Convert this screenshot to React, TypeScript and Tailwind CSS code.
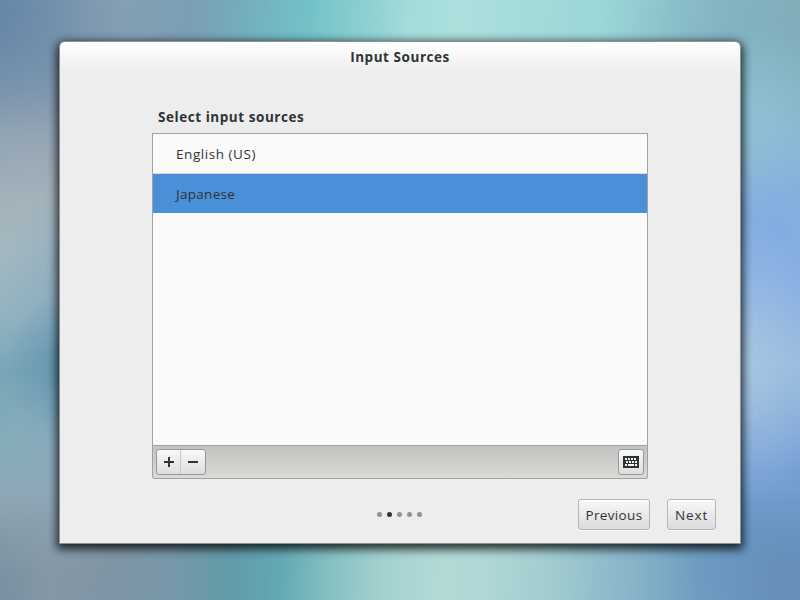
import type { ReactNode } from "react";

function Backdrop() {
  return (
    <>
      <div className="absolute inset-0 bg-[linear-gradient(96deg,#6787a8_0px,#7190ab_50px,#8099b1_90px,#84a0b4_125px,#7a9fb3_190px,#74aebc_245px,#73c2c8_310px,#90d1d2_370px,#a4dcda_410px,#abe0dd_460px,#a5dbdb_520px,#9cd6d7_600px,#8bc0ca_670px,#82b4c1_730px,#82aeba_800px)]" />
      <div className="absolute inset-0 bg-[linear-gradient(92deg,#748c9c_0px,#8598a8_70px,#8095a5_130px,#7798a9_190px,#619ba8_250px,#62a9b3_300px,#85c0c2_350px,#a2d1cf_400px,#b2dad7_460px,#aed7d5_510px,#a1cccf_570px,#88b5c9_650px,#6f9dc2_720px,#668fb9_800px)] [mask-image:linear-gradient(180deg,transparent_200px,black_400px)]" />
      <div className="absolute inset-y-0 left-0 w-40 bg-[linear-gradient(172deg,#6787a8_0px,#7a94ae_70px,#94a5b4_140px,#a3b2bb_200px,#a3b8c0_250px,#93b3c0_310px,#78a6b8_370px,#84acb9_430px,#8fa8b6_500px,#8a9fae_555px,#748c9c_615px)] [mask-composite:intersect] [mask-image:linear-gradient(90deg,black_50px,transparent_140px),linear-gradient(180deg,transparent_0px,black_130px,black_490px,transparent_600px)]" />
      <div className="absolute inset-y-0 left-0 w-40 bg-[radial-gradient(ellipse_65px_75px_at_70px_366px,#5088a8cc_0%,#5088a855_45%,#5088a800_100%),radial-gradient(ellipse_70px_110px_at_75px_290px,#86a5bf99_0%,#86a5bf00_100%),radial-gradient(ellipse_70px_110px_at_75px_440px,#8aa8bf99_0%,#8aa8bf00_100%)]" />
      <div className="absolute inset-y-0 right-0 w-40 bg-[linear-gradient(180deg,#80abb8_0px,#84b5c6_80px,#8bb5d5_155px,#87b0e0_220px,#86aee3_270px,#8db2df_320px,#96bade_365px,#84abd9_420px,#749fd4_470px,#6e9bcb_510px,#6694c0_550px,#668fb2_600px)] [mask-composite:intersect] [mask-image:linear-gradient(270deg,black_50px,transparent_140px),linear-gradient(180deg,transparent_0px,black_130px,black_490px,transparent_600px)]" />
      <div className="absolute inset-y-0 right-0 w-40 bg-[radial-gradient(ellipse_75px_140px_at_112px_365px,#a9c8e2cc_0%,#a9c8e266_45%,#a9c8e200_100%),radial-gradient(ellipse_75px_90px_at_112px_115px,#93c6d8aa_0%,#93c6d800_100%),radial-gradient(ellipse_60px_100px_at_135px_225px,#80abe288_0%,#80abe200_100%)]" />
    </>
  );
}

function SourceRow({ children, selected = false }: { children: ReactNode; selected?: boolean }) {
  return (
    <div
      className={
        selected
          ? "flex h-[39px] items-center bg-[#4a90d9] pt-[2px] pl-[23px] tracking-[0.3px]"
          : "flex h-10 items-center border-b border-[#d9dad5] pt-[2px] pl-[23px] tracking-[0.55px]"
      }
    >
      {children}
    </div>
  );
}

function NavButton({ children, className }: { children: ReactNode; className: string }) {
  return (
    <button
      className={`flex h-[31px] items-center justify-center rounded-[3px] border border-[#b4b5b4] bg-linear-to-b from-[#f8f8f8] to-[#dcdcdc] pt-[2px] shadow-[0_1px_0_#f8f8f8,inset_0_1px_0_#fff] ${className}`}
    >
      {children}
    </button>
  );
}

function KeyboardIcon() {
  return (
    <svg width="16" height="12" viewBox="0 0 16 12" shapeRendering="crispEdges">
      <rect width="16" height="12" rx="1" fill="#2e3436" />
      <path
        fill="#f4f4f4"
        d="M2 2h2v2H2zM5 2h2v2H5zM8 2h2v2H8zM11 2h2v2h-2zM3 5h2v2H3zM6 5h2v2H6zM9 5h2v2H9zM12 5h2v2h-2zM2 8h2v2H2zM5 8h6v2H5zM12 8h2v2h-2z"
      />
    </svg>
  );
}

export default function App() {
  return (
    <div className="relative h-[600px] w-[800px] overflow-hidden px-[59px] pt-[41px] font-['Open_Sans','Noto_Sans',sans-serif] text-[13.5px] text-[#2e3436]">
      <Backdrop />
      <main className="relative flex h-[503px] w-[682px] flex-col rounded-t-[6px] border border-[#8e9496] bg-[#ededed] bg-[linear-gradient(180deg,#fff_0px,#ededed_32px)] shadow-[0_3px_10px_2px_rgba(0,0,0,0.8)]">
        <h1 className="h-[30px] text-center text-[13.5px] leading-[30px] font-bold tracking-[0.55px]">
          <span>Input Sources</span>
        </h1>
        <section className="mx-auto mt-[34px] w-[496px]">
          <h2 className="h-[27px] pl-[6px] text-[13.5px] leading-[22px] font-bold tracking-[0.55px]">
            <span>Select input sources</span>
          </h2>
          <div className="h-[313px] border border-[#a1a3a1] bg-[#fafaf9]">
            <SourceRow>
              <span>English (US)</span>
            </SourceRow>
            <SourceRow selected>
              <span>Japanese</span>
            </SourceRow>
          </div>
          <div className="flex h-[33px] items-start justify-between rounded-b-[3px] border border-t-0 border-[#a1a3a1] bg-linear-to-b from-[#c0c3bf] to-[#d9dbd7] px-[3px] pt-[3px]">
            <div className="flex h-[26px] w-[50px] rounded-[3px] border border-[#969996] bg-linear-to-b from-[#f8f8f8] to-[#dedede]">
              <button className="flex w-6 items-center justify-center border-r border-[#c8c9c8]">
                <svg width="10" height="10" shapeRendering="crispEdges" fill="#2e3436">
                  <path d="M4 0h2v4h4v2H6v4H4V6H0V4h4z" />
                </svg>
              </button>
              <button className="flex w-6 items-center justify-center">
                <svg width="10" height="10" shapeRendering="crispEdges" fill="#2e3436">
                  <path d="M0 4h10v2H0z" />
                </svg>
              </button>
            </div>
            <button className="flex h-[26px] w-[26px] items-center justify-center rounded-[3px] border border-[#969996] bg-linear-to-b from-[#f8f8f8] to-[#dedede]">
              <KeyboardIcon />
            </button>
          </div>
        </section>
        <footer className="mt-5 flex items-center">
          <div className="ml-[317px] flex gap-[5px]">
            <i className="size-[5px] rounded-full bg-[#8e9191]" />
            <i className="size-[5px] rounded-full bg-[#2e3436]" />
            <i className="size-[5px] rounded-full bg-[#8e9191]" />
            <i className="size-[5px] rounded-full bg-[#8e9191]" />
            <i className="size-[5px] rounded-full bg-[#8e9191]" />
          </div>
          <NavButton className="ml-auto w-[72px] tracking-[0.35px]">
            <span>Previous</span>
          </NavButton>
          <NavButton className="mr-6 ml-[17px] w-[49px] tracking-[0.9px]">
            <span>Next</span>
          </NavButton>
        </footer>
      </main>
    </div>
  );
}
